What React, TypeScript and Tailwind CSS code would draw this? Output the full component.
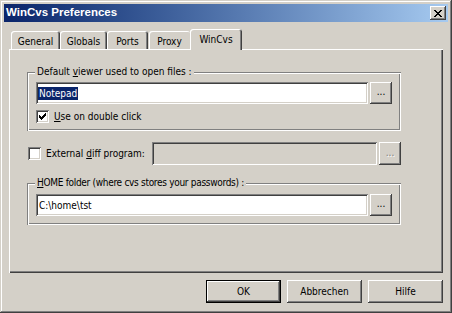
import type { ReactNode } from 'react';

const raised =
  'shadow-[inset_-1px_-1px_#404040,inset_1px_1px_#ffffff,inset_-2px_-2px_#808080,inset_2px_2px_#d4d0c8]';
const sunken =
  'shadow-[inset_1px_1px_#808080,inset_-1px_-1px_#ffffff,inset_2px_2px_#404040,inset_-2px_-2px_#d4d0c8]';
const etched =
  'shadow-[inset_1px_1px_#808080,inset_-1px_-1px_#ffffff,inset_2px_2px_#ffffff,inset_-2px_-2px_#808080]';

const CHECK = ['......x', '.....xx', 'x...xxx', 'xx.xxx.', 'xxxxx..', '.xxx...', '..x....'];
const CLOSE = ['xx....xx', '.xx..xx.', '..xxxx..', '...xx...', '..xxxx..', '.xx..xx.', 'xx....xx'];

function Pixels({ rows, color }: { rows: string[]; color: string }) {
  return (
    <svg width={rows[0].length} height={rows.length} shapeRendering="crispEdges">
      {rows.flatMap((row, y) =>
        [...row].map((c, x) =>
          c === 'x' ? <rect key={`${x}-${y}`} x={x} y={y} width={1} height={1} fill={color} /> : null
        )
      )}
    </svg>
  );
}

function Checkbox({ checked }: { checked?: boolean }) {
  return (
    <div className={`w-[13px] h-[13px] bg-white flex items-center justify-center shrink-0 ${sunken}`}>
      {checked && <Pixels rows={CHECK} color="#000" />}
    </div>
  );
}

function Browse({ disabled }: { disabled?: boolean }) {
  return (
    <div className={`w-[22px] h-full flex items-center justify-center ${raised}`}>
      <span
        className={
          disabled
            ? 'text-[#808080] [text-shadow:1px_1px_0_#ffffff] leading-none pb-[2px]'
            : 'leading-none pb-[2px]'
        }
      >
        ...
      </span>
    </div>
  );
}

function GroupBox({ label, className, children }: { label: ReactNode; className: string; children: ReactNode }) {
  return (
    <div className={`relative ${etched} ${className}`}>
      <span className="absolute top-[-7px] left-[8px] px-[2px] bg-[#d4d0c8] leading-[13px] whitespace-nowrap">
        {label}
      </span>
      {children}
    </div>
  );
}

function Tab({ label, width, selected, noRight }: { label: string; width: string; selected?: boolean; noRight?: boolean }) {
  if (selected) {
    return (
      <div
        className={`${width} h-[21px] bg-[#d4d0c8] rounded-t-[3px] flex justify-center pt-[3px] shadow-[inset_1px_1px_#ffffff,inset_-1px_0_#404040,inset_-2px_0_#808080]`}
      >
        {label}
      </div>
    );
  }
  return (
    <div
      className={`${width} h-[18px] mt-[2px] bg-[#d4d0c8] rounded-t-[3px] flex justify-center pt-[3px] ${
        noRight ? 'shadow-[inset_1px_1px_#ffffff]' : 'shadow-[inset_1px_1px_#ffffff,inset_-1px_0_#404040,inset_-2px_0_#808080]'
      }`}
    >
      {label}
    </div>
  );
}

function DialogButton({ label, isDefault }: { label: string; isDefault?: boolean }) {
  if (isDefault) {
    return (
      <div className="w-[75px] h-[23px] border border-black">
        <div className={`w-full h-full flex items-center justify-center ${raised}`}>{label}</div>
      </div>
    );
  }
  return <div className={`w-[75px] h-[23px] flex items-center justify-center ${raised}`}>{label}</div>;
}

export default function App() {
  return (
    <div
      className="w-[452px] h-[313px] bg-[#d4d0c8] p-[4px] flex flex-col text-[10px] text-black font-['DejaVu_Sans_Condensed','Liberation_Sans',sans-serif] shadow-[inset_-1px_-1px_#404040,inset_1px_1px_#d4d0c8,inset_-2px_-2px_#808080,inset_2px_2px_#ffffff] select-none"
    >
      {/* title bar */}
      <div className="h-[18px] flex items-center justify-between pl-[2px] pr-[2px] bg-gradient-to-r from-[#0a246a] to-[#a6caf0]">
        <span className="text-white font-bold text-[11.5px] leading-none font-['Liberation_Sans',sans-serif]">
          WinCvs Preferences
        </span>
        <div className={`w-[16px] h-[14px] bg-[#d4d0c8] flex items-center justify-center ${raised}`}>
          <Pixels rows={CLOSE} color="#000" />
        </div>
      </div>

      <div className="px-[5px] flex flex-col">
        {/* tabs */}
        <div className="mt-[7px] ml-[2px] flex h-[21px] relative z-10 mb-[-1px]">
          <Tab label="General" width="w-[49px]" />
          <Tab label="Globals" width="w-[47px]" />
          <Tab label="Ports" width="w-[41px]" />
          <div className="w-[1px]" />
          <Tab label="Proxy" width="w-[41px]" noRight />
          <Tab label="WinCvs" width="w-[52px]" selected />
        </div>

        {/* tab panel */}
        <div className="h-[224px] pl-[18px] pt-[23px] flex flex-col shadow-[inset_1px_1px_#ffffff,inset_-1px_-1px_#404040,inset_-2px_-2px_#808080]">
          <GroupBox
            className="w-[374px] h-[59px] pl-[9px] pt-[10px] flex flex-col"
            label={
              <>
                Default <span className="underline">v</span>iewer used to open files :
              </>
            }
          >
            <div className="flex h-[22px] gap-[2px]">
              <div className={`w-[332px] h-full bg-white flex items-center pl-[2px] ${sunken}`}>
                <span className="bg-[#0a246a] text-white leading-[13px] px-[1px]">Notepad</span>
              </div>
              <Browse />
            </div>
            <div className="flex items-center mt-[6px] gap-[5px]">
              <Checkbox checked />
              <span className="leading-[13px]">
                <span className="underline">U</span>se on double click
              </span>
            </div>
          </GroupBox>

          <div className="flex items-center h-[23px] mt-[11px] ml-[1px]">
            <Checkbox />
            <span className="ml-[5px] w-[106px] leading-[13px]">
              External <span className="underline">d</span>iff program:
            </span>
            <div className={`w-[225px] h-full bg-[#d4d0c8] ${sunken}`} />
            <div className="ml-[2px] h-full">
              <Browse disabled />
            </div>
          </div>

          <GroupBox
            className="w-[374px] h-[42px] mt-[18px] pl-[9px] pt-[11px]"
            label={
              <span className="tracking-[-0.3px]">
                <span className="underline">H</span>OME folder (where cvs stores your passwords) :
              </span>
            }
          >
            <div className="flex h-[22px] gap-[2px]">
              <div className={`w-[332px] h-full bg-white flex items-center pl-[3px] ${sunken}`}>
                <span className="leading-[13px]">C:\home\tst</span>
              </div>
              <Browse />
            </div>
          </GroupBox>
        </div>

        {/* buttons */}
        <div className="mt-[7px] flex justify-end gap-[6px]">
          <DialogButton label="OK" isDefault />
          <DialogButton label="Abbrechen" />
          <DialogButton label="Hilfe" />
        </div>
      </div>
    </div>
  );
}
